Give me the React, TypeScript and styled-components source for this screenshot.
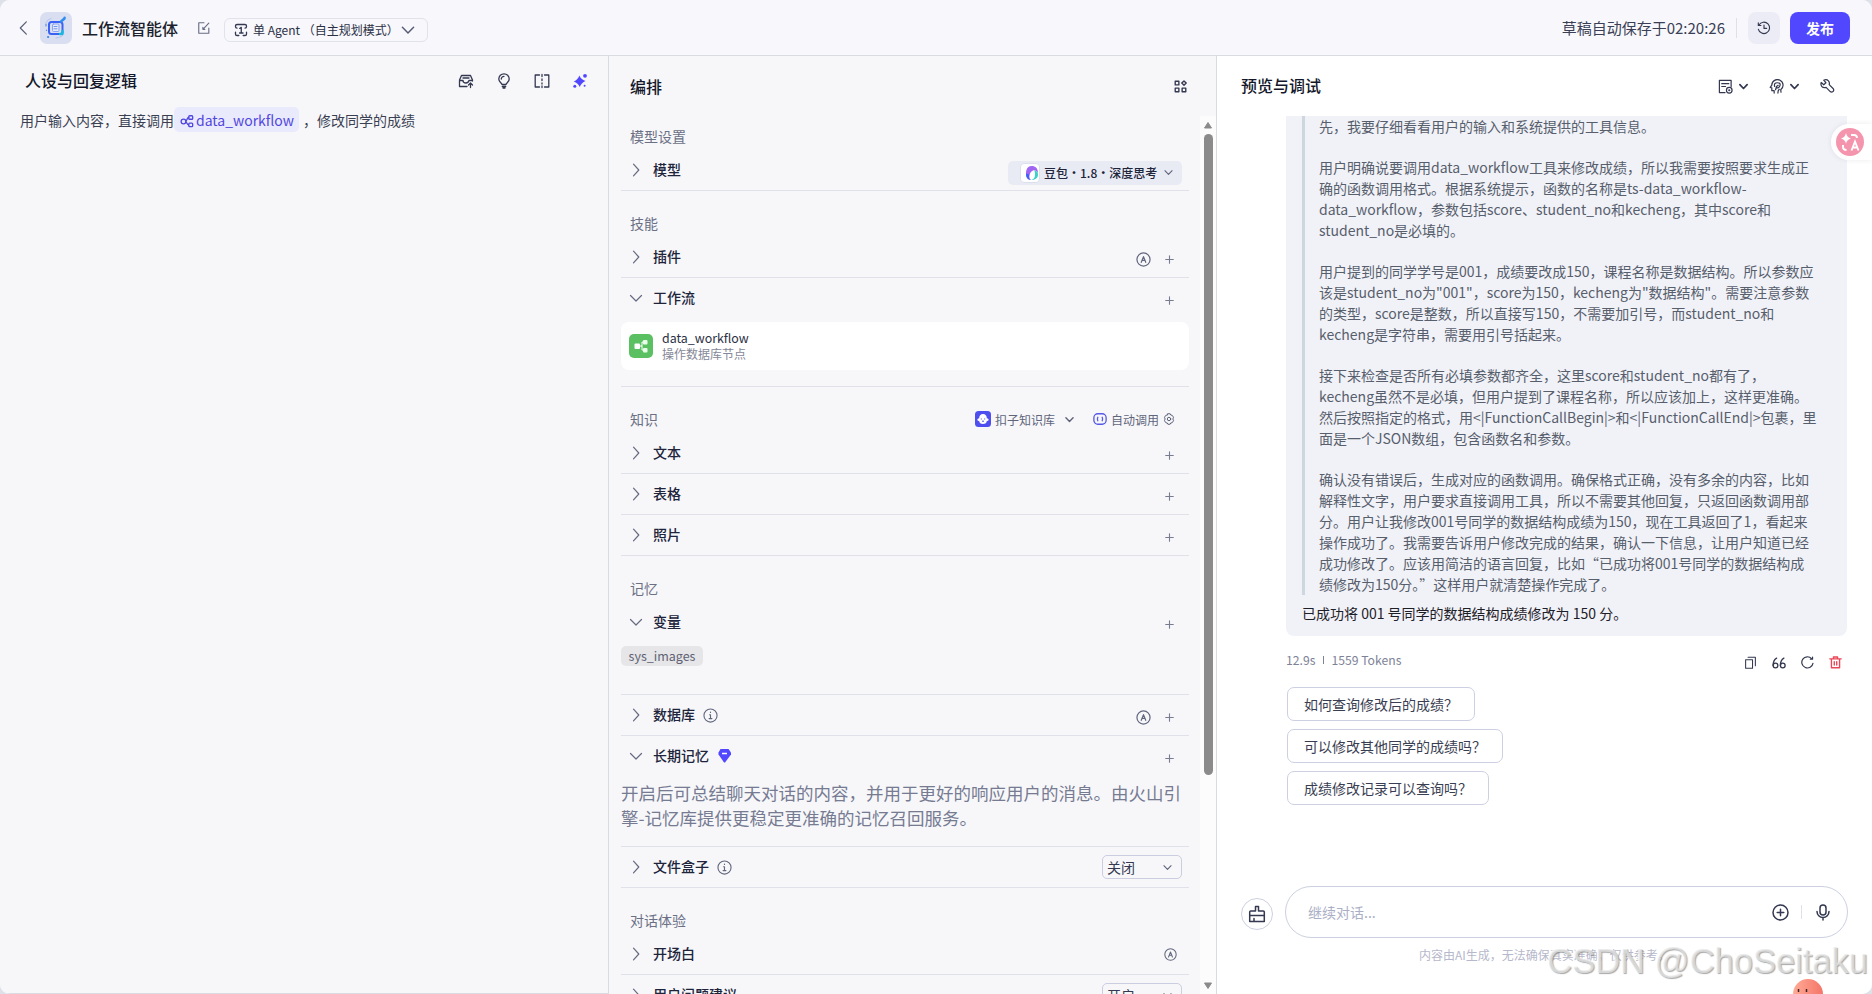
import React from 'react';
import styled, { createGlobalStyle } from 'styled-components';

const Global = createGlobalStyle`
  *{box-sizing:border-box}
  html,body{margin:0;height:100%;overflow:hidden}
  body{font-family:"Noto Sans CJK SC","Noto Sans",sans-serif;font-size:14px;color:#1f2233;background:#dfe1e8}
  svg{display:block;flex:none}
`;

const Page = styled.div`
  width:1872px;height:994px;display:flex;flex-direction:column;background:#f7f7fa;
  border-radius:10px;overflow:hidden;position:relative;white-space:nowrap;
`;
const Header = styled.header`
  height:56px;flex:none;display:flex;align-items:center;background:#f7f7fc;border-bottom:1px solid #dadbe2;
  padding:0 22px 0 18px;
`;
const Logo = styled.div`
  width:32px;height:32px;margin-left:10px;border-radius:7px;background:#d9dff0;display:grid;place-items:center;
`;
const AppName = styled.h1`margin:0 19px 0 10px;font-size:16px;font-weight:500;line-height:24px;color:#1c1f2e;`;
const ModePill = styled.button`
  margin:5px 0 0 13px;height:24px;width:204px;padding:0 14px 1px 9px;border:1px solid #e1e2ea;border-radius:6px;background:transparent;
  display:flex;align-items:center;gap:5px;font:400 12px "Noto Sans CJK SC",sans-serif;color:#2c3045;
  svg:last-child{margin:1px 0 0 -3px}
`;
const Saved = styled.span`margin-left:auto;font-size:15px;line-height:22px;color:#3a3f55;`;
const VLine = styled.i<{ $h: number; $m: string; $c?: string }>`width:1px;height:${p => p.$h}px;margin:${p => p.$m};background:${p => p.$c ?? '#dfe0e8'};`;
const HistoryBtn = styled.button`
  width:32px;height:32px;border:0;border-radius:8px;background:#ececf6;display:grid;place-items:center;padding:0;
`;
const Publish = styled.button`
  width:60px;height:32px;margin-left:10px;border:0;border-radius:8px;background:#5147ff;color:#fff;padding:0;
  font:700 14px "Noto Sans CJK SC",sans-serif;
`;
const Body = styled.main`flex:1;min-height:0;display:grid;grid-template-columns:609px 608px 655px;`;
const Panel = styled.section<{ $white?: boolean }>`
  min-width:0;min-height:0;display:flex;flex-direction:column;overflow:hidden;
  background:${p => (p.$white ? '#fff' : '#f7f7fa')};border-right:${p => (p.$white ? 0 : 1)}px solid #dadbe2;
`;
const PersonaPanel = styled(Panel)`border-bottom:1px solid #dadbe2;`;
const PanelHead = styled.div<{ $h: number; $pad: string }>`
  height:${p => p.$h}px;flex:none;display:flex;align-items:center;justify-content:space-between;padding:${p => p.$pad};
`;
const PanelTitle = styled.h2`margin:-2px 0 0;font-size:16px;font-weight:500;line-height:24px;color:#14172a;`;
const Tools = styled.div<{ $gap: number }>`display:flex;align-items:center;gap:${p => p.$gap}px;`;
const Prompt = styled.p`margin:0;padding:1px 20px;display:flex;align-items:center;font-size:14px;line-height:24px;color:#3a3f52;`;
const Mention = styled.span`
  height:25px;margin-right:4px;padding:0 5px 0 6px;display:inline-flex;align-items:center;gap:2px;border-radius:5px;background:#e9eafb;color:#5147e0;
  svg{margin-top:3px}
`;

const ScrollArea = styled.div`flex:1;min-height:0;display:flex;`;
const List = styled.div`flex:1;min-width:0;padding:0 11px 0 12px;overflow:hidden;`;
const ScrollBar = styled.div`
  width:16px;flex:none;background:#fcfcfc;display:flex;flex-direction:column;align-items:center;padding:6px 0 5px 0;
`;
const Thumb = styled.div`width:9px;height:641px;margin:5px 0 auto;border-radius:5px;background:#8b8b8b;`;
const GroupHead = styled.div<{ $first?: boolean }>`
  height:${p => (p.$first ? 34 : 46)}px;padding:${p => (p.$first ? 8 : 20)}px 14px 0 9px;display:flex;justify-content:space-between;
  font-size:14px;line-height:25px;color:#6b7085;
`;
const Row = styled.div<{ $line?: boolean }>`
  height:41px;padding:0 7px 0 7px;display:flex;align-items:center;border-bottom:1px solid ${p => (p.$line ? '#e1e1ea' : 'transparent')};
`;
const RowName = styled.span`margin:-2px 8px 0 9px;font-size:14px;font-weight:500;line-height:24px;color:#20243a;`;
const RowEnd = styled.div<{ $pad?: number; $top?: number }>`
  margin-left:auto;padding-right:${p => p.$pad ?? 8}px;padding-top:${p => p.$top ?? 5}px;display:flex;align-items:center;gap:14px;
`;
const ModelSelect = styled.div`
  width:174px;height:24px;padding:0 9px 0 12px;border-radius:5px;background:#e9ebf4;display:flex;align-items:center;gap:4px;
  font-size:12px;font-weight:500;color:#20243a;
  svg:last-child{margin-left:auto}
`;
const ModelIcon = styled.span`width:20px;height:20px;flex:none;border-radius:4px;border:1px solid #dcdfee;background:#fff;display:grid;place-items:center;`;
const FlowCard = styled.div`
  height:48px;margin:3px 0 16px;padding:0 8px;border-radius:8px;background:#fff;display:flex;align-items:center;gap:9px;
`;
const FlowIcon = styled.div`width:24px;height:24px;border-radius:5px;background:#5bc062;display:grid;place-items:center;`;
const FlowText = styled.div`margin-top:-1px;`;
const FlowName = styled.div`font-size:12.4px;line-height:16px;color:#2c3045;`;
const FlowDesc = styled.div`font-size:12px;line-height:15px;color:#858898;`;
const Divider = styled.div`height:1px;background:#e1e1ea;`;
const KbOptions = styled.div`display:flex;align-items:center;font-size:12px;color:#60657b;height:24px;gap:4px;`;
const Gap = styled.i<{ $w: number }>`width:${p => p.$w}px;`;
const Tag = styled.div`
  width:82px;height:20px;margin:3px 0 28px;border-radius:5px;background:#e6e6e9;font-size:12.5px;line-height:20px;text-align:center;color:#5e6272;
`;
const Hint = styled.p`margin:3px 0 16px;font-size:17.5px;line-height:25px;color:#767b92;`;
const SmallSelect = styled.div`
  width:80px;height:24px;padding:0 9px 0 4px;border:1px solid #cbcde0;border-radius:5px;display:flex;align-items:center;justify-content:space-between;
  font-size:14px;line-height:20px;color:#343951;
`;

const ChatLog = styled.div`height:520px;flex:none;margin:0 25px 0 69px;padding:0 16px;background:#f1f2f8;border-radius:0 0 8px 8px;overflow:hidden;`;
const Reasoning = styled.div`border-left:3px solid #ced6de;padding-left:14px;color:#575e6c;font-size:14px;line-height:21px;height:479px;`;
const Para = styled.p`margin:0 0 20px;`;
const Answer = styled.p`margin:0;padding-top:6px;font-size:14px;line-height:24px;color:#1e2027;`;
const Meta = styled.div`
  height:50px;padding:0 30px 2px 69px;display:flex;align-items:center;font-size:12.2px;color:#7e8297;
`;
const MetaTools = styled.div`margin:5px 0 0 auto;display:flex;align-items:center;gap:15px;`;
const Suggestions = styled.div`padding:1px 0 0 70px;display:flex;flex-direction:column;align-items:flex-start;gap:8px;flex:1;`;
const Suggestion = styled.button<{ $w: number }>`
  width:${p => p.$w}px;height:34px;padding:0 0 0 16px;text-align:left;border:1px solid #cdd0e2;border-radius:7px;background:#fff;
  font:400 14px "Noto Sans CJK SC",sans-serif;color:#3a3e52;
`;
const Composer = styled.div`display:flex;align-items:center;gap:12px;padding:0 24px 0 24px;`;
const Clear = styled.button`width:32px;height:32px;margin-top:4px;padding:0;border:1px solid #cdd0e0;border-radius:50%;background:#fff;display:grid;place-items:center;`;
const Input = styled.div`
  flex:1;height:52px;padding:0 16px 0 22px;border:1px solid #cdd0e0;border-radius:26px;display:flex;align-items:center;justify-content:space-between;
  font-size:14px;color:#abafc6;
`;
const Notice = styled.div`height:56px;padding:8px 0 0 202px;font-size:12px;line-height:18px;color:#b6b8cb;`;
const Watermark = styled.div`
  position:absolute;right:4px;bottom:14px;font:34.5px/38px "Liberation Sans",sans-serif;color:rgba(232,232,232,.72);
  text-shadow:1px 1px 1px rgba(110,110,110,.6),-1px -1px 1px rgba(255,255,255,.8);
`;
const Translate = styled.div`
  position:absolute;right:0;top:124px;width:41px;height:36px;padding-left:5px;border-radius:18px 0 0 18px;background:rgba(255,255,255,.9);
  box-shadow:0 0 5px rgba(60,60,90,.1);display:flex;align-items:center;
`;
const Mascot = styled.div`position:absolute;left:1793px;bottom:0;`;

type IconProps = { w?: number; h?: number; vb?: string; c?: string; sw?: number; children: React.ReactNode };
const Icon = ({ w = 16, h = w, vb = '0 0 16 16', c = '#343850', sw = 1.3, children }: IconProps) => (
  <svg width={w} height={h} viewBox={vb} fill="none" stroke={c} strokeWidth={sw} strokeLinecap="round" strokeLinejoin="round">{children}</svg>
);
const Right = () => <Icon c="#656a80" sw={1.2}><path d="M5.5 2.2 10.8 8l-5.3 5.8" /></Icon>;
const Down = () => <Icon c="#656a80" sw={1.2}><path d="M2.5 5.5 8 11l5.5-5.5" /></Icon>;
const MiniDown = ({ s = 9, c = '#5c6178', sw = 1.2 }) => <Icon w={s} vb="0 0 10 10" c={c} sw={sw}><path d="m1 3 4 4.2L9 3" /></Icon>;
const Plus = () => <Icon w={9} vb="0 0 9 9" c="#777c91" sw={1.1}><path d="M4.5.7v7.6M.7 4.5h7.6" /></Icon>;
const Auto = ({ s = 15 }) => <Icon w={s} c="#62677e" sw={1.3}><circle cx="8" cy="8" r="7" /><path d="m5.6 11 2.4-6 2.4 6M6.500 9h3" /></Icon>;
const Info = () => <Icon w={15} c="#62677e" sw={1.2}><circle cx="8" cy="8" r="7" /><path d="M8 4.3v.5M7 7.2h1v4M6.5 11.3h3" /></Icon>;

type RowDef = { name: string; open?: boolean; line?: boolean; auto?: boolean; plus?: boolean; extra?: React.ReactNode; end?: React.ReactNode };
const Item = ({ name, open, line = true, auto, plus = true, extra, end }: RowDef) => (
  <Row $line={line}>
    {open ? <Down /> : <Right />}
    <RowName>{name}</RowName>
    {extra}
    {end ?? <RowEnd>{auto && <Auto />}{plus && <Plus />}</RowEnd>}
  </Row>
);
const Choice = ({ value }: { value: string }) => (
  <RowEnd $pad={0} $top={0}><SmallSelect>{value}<MiniDown /></SmallSelect></RowEnd>
);

const reasoning: string[][] = [
  ['先，我要仔细看看用户的输入和系统提供的工具信息。'],
  ['用户明确说要调用data_workflow工具来修改成绩，所以我需要按照要求生成正', '确的函数调用格式。根据系统提示，函数的名称是ts-data_workflow-', 'data_workflow，参数包括score、student_no和kecheng，其中score和', 'student_no是必填的。'],
  ['用户提到的同学学号是001，成绩要改成150，课程名称是数据结构。所以参数应', '该是student_no为"001"，score为150，kecheng为"数据结构"。需要注意参数', '的类型，score是整数，所以直接写150，不需要加引号，而student_no和', 'kecheng是字符串，需要用引号括起来。'],
  ['接下来检查是否所有必填参数都齐全，这里score和student_no都有了，', 'kecheng虽然不是必填，但用户提到了课程名称，所以应该加上，这样更准确。', '然后按照指定的格式，用<|FunctionCallBegin|>和<|FunctionCallEnd|>包裹，里', '面是一个JSON数组，包含函数名和参数。'],
  ['确认没有错误后，生成对应的函数调用。确保格式正确，没有多余的内容，比如', '解释性文字，用户要求直接调用工具，所以不需要其他回复，只返回函数调用部', '分。用户让我修改001号同学的数据结构成绩为150，现在工具返回了1，看起来', '操作成功了。我需要告诉用户修改完成的结果，确认一下信息，让用户知道已经', '成功修改了。应该用简洁的语言回复，比如“已成功将001号同学的数据结构成', '绩修改为150分。”这样用户就清楚操作完成了。'],
];

const TopBar = () => (
  <Header>
    <Icon w={12} h={16} vb="0 0 12 16" c="#5a5f76" sw={1.2}><path d="M8.3 1.8 2.3 8l6 6.2" /></Icon>
    <Logo>
      <Icon w={24} vb="0 0 24 24" c="#3b62f5" sw={2}>
        <rect x="5" y="6" width="13.5" height="12" rx="2.5" />
        <rect x="8.5" y="8" width="6.5" height="7.5" rx="1" fill="#e4e8f8" stroke="#8aa5f3" strokeWidth="1" />
        <path d="M10 10.5h3M10 12.8h3" stroke="#7297ee" strokeWidth="1" />
        <path d="m17 5.500 3.500-3" stroke="#2f8df0" strokeWidth="2.5" />
        <path d="M16 18h2.500v-3" stroke="#19b8df" strokeWidth="2.5" />
        <path d="M20.500 1.500h.3M4 21h.2" stroke="#368cf2" />
        <path d="M2 8v2M2.500 14v.5" stroke="#5c8df4" strokeWidth="1.2" />
        <path d="M7 2.500q-4 1-5 4M12 22q6-.5 8-4" stroke="#a9bdec" strokeWidth=".8" />
      </Icon>
    </Logo>
    <AppName>工作流智能体</AppName>
    <Icon w={14} c="#6a6e82"><path d="M8 2H2v12h11.5V8M7 9.3 13.5 2.5M6.7 7.2v2.3H9" /></Icon>
    <ModePill>
      <Icon w={14} sw={1.5}><path d="M3.500 5.800A1.800 1.800 0 0 1 1.700 4V3.500a1.800 1.800 0 0 1 1.800-1.800h9a1.800 1.800 0 0 1 1.800 1.800V4a1.800 1.800 0 0 1-1.800 1.800M5.500 14.300h-2a1.800 1.800 0 0 1-1.800-1.800v-2M14.300 10.500v2a1.800 1.800 0 0 1-1.800 1.800h-2M6.500 6.200 8.300 5v6.200M6.300 11.400h4" /></Icon>
      单 Agent （自主规划模式）
      <MiniDown s={14} c="#555a71" sw={1} />
    </ModePill>
    <Saved>草稿自动保存于02:20:26</Saved>
    <VLine $h={20} $m="0 11px" />
    <HistoryBtn>
      <Icon w={14}><path d="M2.3 4.500A6.500 6.500 0 1 1 1.600 9.500M1.500 2.200v3h3M8 4.700V8.500h3" /></Icon>
    </HistoryBtn>
    <Publish>发布</Publish>
  </Header>
);

const Persona = () => (
  <PersonaPanel>
    <PanelHead $h={50} $pad="0 20px 0 25px">
      <PanelTitle>人设与回复逻辑</PanelTitle>
      <Tools $gap={22}>
        <Icon><path d="M1.500 7 3.500 2.500h9L14.500 7v1M1.500 7v6.500H9M1.500 7.500H5q0 2.500 3 2.500 2.200 0 3-2.500h3.500M5 5h6M12.500 14.500v-4.500M10.500 12l2-2 2 2" /></Icon>
        <Icon><path d="M6 11.500C5.500 9.800 2.800 9 2.800 6a5.200 5.200 0 0 1 10.400 0c0 3-2.700 3.800-3.200 5.500zM6.300 13.500h3.400M7 15h2M5.300 6A2.700 2.700 0 0 1 8 3.300" /></Icon>
        <Icon><path d="M5.500 2H1.200v12h4.300M10.500 2h4.300v12h-4.300M8 1.500v2M8 6v1.500M8 10v1M8 13v1.500" /></Icon>
        <Icon c="none"><g fill="#5147ff"><path d="M7.300 2.500Q8.800 6 13.500 8 9.300 9.800 7.800 14 6.200 10 1.800 8.500 6 6.500 7.300 2.500Z" /><circle cx="13" cy="2.800" r="1.900" /><circle cx="2.800" cy="13.300" r="1.500" /><circle cx="12.600" cy="12.800" r="1" /></g></Icon>
      </Tools>
    </PanelHead>
    <Prompt>
      用户输入内容，直接调用
      <Mention>
        <Icon w={14} c="#5147e0" sw={1.5}><circle cx="4" cy="8.500" r="2.700" /><rect x="10" y="2" width="4.500" height="4" rx="1" /><rect x="10" y="10.500" width="4.500" height="4" rx="1" /><path d="M6.700 8C8 7.500 8 4 10 4M6.700 9c1.300.5 1.300 3.500 3.300 3.500" /></Icon>
        data_workflow
      </Mention>
      ，修改同学的成绩
    </Prompt>
  </PersonaPanel>
);

const Arrange = () => (
  <Panel>
    <PanelHead $h={60} $pad="1px 29px 0 21px">
      <PanelTitle>编排</PanelTitle>
      <Icon w={13} sw={1.7}><path d="M1.500 1.500h4.500v4.500H1.500zM1.500 10h4.500v4.500H1.500zM10 10h4.500v4.500H10z" /><path d="m12.300 1.100 2.700 2.700-2.700 2.700-2.700-2.700z" /></Icon>
    </PanelHead>
    <ScrollArea>
      <List>
        <GroupHead $first>模型设置</GroupHead>
        <Item name="模型" end={
          <RowEnd $pad={0}>
            <ModelSelect>
              <ModelIcon>
                <svg width="14" height="16" viewBox="0 0 14 16"><path d="M6.500 1C3 1 1 4 1 8.500c0 4 1.500 6 4.500 6.500-2-2.500-1.200-8 2.500-9.500 2-.6 4 .8 5 2.500C13 3.500 10.500 1 6.500 1Z" fill="#a065f2" /><path d="M1 8.500c0 4.500 2 6.500 5.500 6.500-2.500-.5-3-3-2.200-5.500Z" fill="#3a63f8" /><path d="M9 5.500c3 0 4.200 2 4 4.500-.3 3.500-3 5-6.500 5 2-.8 3.500-2.500 3.500-5S10 6.500 9 5.500Z" fill="#3dd2c9" /></svg>
              </ModelIcon>
              豆包・1.8・深度思考
              <MiniDown />
            </ModelSelect>
          </RowEnd>
        } />
        <GroupHead>技能</GroupHead>
        <Item name="插件" auto />
        <Item name="工作流" open line={false} />
        <FlowCard>
          <FlowIcon><svg width="16" height="16" viewBox="0 0 16 16"><path d="M6 8h3V4h3M9 8v4h3" stroke="#fff" fill="none" /><rect x="1.500" y="5.500" width="5.500" height="5.500" rx="1" fill="#fff" /><rect x="10" y="2" width="4.500" height="4.500" rx="1" fill="#e8ffea" /><rect x="10" y="10" width="4.500" height="4.500" rx="1" fill="#e8ffea" /></svg></FlowIcon>
          <FlowText><FlowName>data_workflow</FlowName><FlowDesc>操作数据库节点</FlowDesc></FlowText>
        </FlowCard>
        <Divider />
        <GroupHead>
          知识
          <KbOptions>
            <svg width="16" height="16" viewBox="0 0 16 16"><rect width="16" height="16" rx="3.500" fill="#4e4fee" /><path d="M8 3c2.500 0 3.800 1.700 3.800 4.200 1.500.3 2.200 1.200 1.600 2.300-.5.700-1.600.4-1.600.4 0 1.700-1.500 3.100-3.800 3.100s-3.800-1.400-3.800-3.100c0 0-1.100.3-1.600-.4-.6-1.100.1-2 1.600-2.300C4.200 4.700 5.500 3 8 3Z" fill="#fff" /><path d="M6.300 7.500v1M9.700 7.500v1M7 10q1 .8 2 0" stroke="#4e4fee" fill="none" /></svg>
            扣子知识库<Gap $w={2} /><MiniDown sw={1.5} /><Gap $w={11} />
            <Icon w={14} c="#5558e8" sw={1.5}><rect x="1" y="2" width="14" height="12" rx="4.500" /><path d="M5.500 6q-1 2 0 4M10.500 6q1 2 0 4" /></Icon>
            自动调用
            <Icon w={12} c="#5c6177" sw={1.3}><path d="M6.500 1h3l.8 1.700 1.900.3 1.800 2.700L13.200 8l.8 2.300-1.800 2.700-1.900.3L9.500 15h-3l-.8-1.700-1.900-.3L2 10.300 2.800 8 2 5.700 3.800 3l1.900-.3z" /><circle cx="8" cy="8" r="2.300" /></Icon>
          </KbOptions>
        </GroupHead>
        <Item name="文本" />
        <Item name="表格" />
        <Item name="照片" />
        <GroupHead>记忆</GroupHead>
        <Item name="变量" open line={false} />
        <Tag>sys_images</Tag>
        <Divider />
        <Item name="数据库" auto extra={<Info />} />
        <Item name="长期记忆" open line={false} extra={
          <svg width="16" height="14" viewBox="0 0 16 14"><path d="M3.500 0h8L14 3.500v2L8 13.500H7L1.500 5.500v-2Z" fill="#5147ff" /><path d="M5 4.500h5" stroke="#fff" strokeWidth="1.500" /></svg>
        } />
        <Hint>开启后可总结聊天对话的内容，并用于更好的响应用户的消息。由火山引<br />擎-记忆库提供更稳定更准确的记忆召回服务。</Hint>
        <Divider />
        <Item name="文件盒子" extra={<Info />} end={<Choice value="关闭" />} />
        <GroupHead>对话体验</GroupHead>
        <Item name="开场白" end={<RowEnd $pad={5} $top={0}><Auto s={13} /></RowEnd>} />
        <Item name="用户问题建议" end={<Choice value="开启" />} />
      </List>
      <ScrollBar>
        <svg width="8" height="7" viewBox="0 0 8 7"><path d="M4 .5 7.500 6h-7z" fill="#8b8b8b" stroke="#8b8b8b" strokeLinejoin="round" /></svg>
        <Thumb />
        <svg width="8" height="7" viewBox="0 0 8 7"><path d="M4 6.500.5 1h7z" fill="#8b8b8b" stroke="#8b8b8b" strokeLinejoin="round" /></svg>
      </ScrollBar>
    </ScrollArea>
  </Panel>
);

const Preview = () => (
  <Panel $white>
    <PanelHead $h={60} $pad="0 37px 0 24px">
      <PanelTitle>预览与调试</PanelTitle>
      <Tools $gap={6}>
        <Icon w={15}><path d="M7.500 14.500H1.500v-13h12.500V8M4 5h7.500M4 8h4" /><circle cx="12" cy="12" r="3" /><circle cx="12" cy="12" r=".5" /></Icon>
        <MiniDown sw={1.9} c="#343850" /><Gap $w={9} />
        <Icon w={15}><path d="M5.500 15v-2.500H3V9.500L1.300 9 3 6.500A6 6 0 1 1 12.500 11.500L12.800 14M9.500 15q0-3 1.500-4M6 8q-1-4 3-4t2.500 3.500Q10.500 10 8 9.500M7 11.500l1-3.500 1.800-1.300" /></Icon>
        <MiniDown sw={1.9} c="#343850" /><Gap $w={9} />
        <Icon w={15}><path d="M4 1.300q3-1.300 5 .7 1.500 1.700.8 4l4.400 4.400q1 1.500-.3 2.900-1.600 1.200-3 .1L6.500 9Q3.500 9.800 1.800 7.800.5 6 1.300 3.700l2.700 2.500L6.300 4z" /></Icon>
      </Tools>
    </PanelHead>
    <ChatLog>
      <Reasoning>
        {reasoning.map((lines, i) => (
          <Para key={i}>{lines.map((l, j) => <React.Fragment key={j}>{j > 0 && <br />}{l}</React.Fragment>)}</Para>
        ))}
      </Reasoning>
      <Answer>已成功将 001 号同学的数据结构成绩修改为 150 分。</Answer>
    </ChatLog>
    <Meta>
      12.9s<VLine $h={8} $m="0 7px 0 8px" $c="#7e8297" />1559 Tokens
      <MetaTools>
        <Icon w={13}><path d="M2 4.500h8.500v10.500H2zM5 1.500h9v10.500" /></Icon>
        <Icon w={14} sw={1.5}><circle cx="4" cy="10.800" r="2.700" /><path d="M1.300 10.800q0-6 4-8.300" /><circle cx="12.300" cy="10.800" r="2.700" /><path d="M9.600 10.800q0-6 4-8.300" /></Icon>
        <Icon w={13} sw={1.5}><path d="M14.700 9A6.900 6.900 0 1 1 13 3.200M14.200 1.300V4H11.500" /></Icon>
        <Icon w={13} c="#ec4656" sw={1.7}><path d="M1 3.500h14M5.500 3V1.300h5V3M3 3.500v11h10v-11M6.500 7v4M9.500 7v4" /></Icon>
      </MetaTools>
    </Meta>
    <Suggestions>
      <Suggestion $w={188}>如何查询修改后的成绩？</Suggestion>
      <Suggestion $w={216}>可以修改其他同学的成绩吗？</Suggestion>
      <Suggestion $w={202}>成绩修改记录可以查询吗？</Suggestion>
    </Suggestions>
    <Composer>
      <Clear><Icon w={18} vb="0 0 18 18" sw={1.5}><path d="M7.500 6V1.500h3V6h4.800q1 0 1 1v9.500H1.700V7q0-1 1-1zM1.700 10.500h14.600M6 13.500v3" /></Icon></Clear>
      <Input>
        继续对话...
        <Tools $gap={0}>
          <Icon w={17} vb="0 0 17 17" sw={1.5}><circle cx="8.500" cy="8.500" r="7.500" /><path d="M8.500 5.200v6.600M5.200 8.500h6.600" /></Icon>
          <VLine $h={14} $m="0 13px 0 12px" />
          <Icon w={16} h={17} vb="0 0 16 17" sw={1.5}><rect x="5" y="1" width="6" height="10" rx="3" /><path d="M2 7.500a6 6 0 0 0 12 0M8 13.500V16" /></Icon>
        </Tools>
      </Input>
    </Composer>
    <Notice>内容由AI生成，无法确保真实准确，仅供参考。</Notice>
  </Panel>
);

export default function App() {
  return (
    <Page>
      <Global />
      <TopBar />
      <Body><Persona /><Arrange /><Preview /></Body>
      <Translate>
        <svg width="28" height="28" viewBox="0 0 28 28"><circle cx="14" cy="14" r="14" fill="#f495ad" /><path d="M10 5q1 4.500 5 5.500-4 1-5 5-1-4-5-5Q9 9.500 10 5Z" fill="#fff" /><path d="M15 7h3q3 0 3 3M7 17v2q0 3 3.500 3M15.500 22.500l3.500-9 3.500 9M16.800 19.500h4.500" fill="none" stroke="#fff" strokeWidth="1.900" /></svg>
      </Translate>
      <Mascot>
        <svg width="30" height="15" viewBox="0 0 30 15"><defs><linearGradient id="coral"><stop stopColor="#ffab96" /><stop offset="1" stopColor="#f47568" /></linearGradient></defs><circle cx="15" cy="15" r="15" fill="url(#coral)" /><path d="M5.500 10v3M13.500 10v3" stroke="#3a2527" strokeWidth="1.500" /></svg>
      </Mascot>
      <Watermark>CSDN @ChoSeitaku</Watermark>
    </Page>
  );
}
